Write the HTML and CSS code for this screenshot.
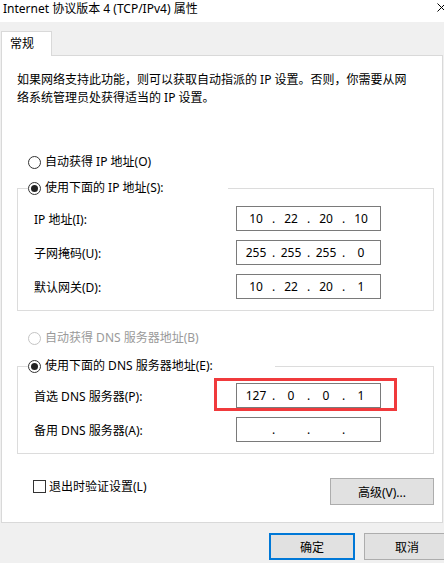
FILE: index.html
```html
<!DOCTYPE html>
<html>
	<head>
		<meta charset="UTF-8">
		<title>Internet 协议版本 4 (TCP/IPv4) 属性</title>
		<link rel="stylesheet" href="styles.css">
	</head>
	<body>
		<div class="titlebar">
			<span class="title">Internet 协议版本 4 (TCP/IPv4) 属性</span>
			<svg class="close" width="10" height="10" viewBox="0 0 10 10"><path d="M1.5 1.5L9.5 9.5M9.5 1.5L1.5 9.5" stroke="#000" stroke-width="1"/></svg>
		</div>
		<div class="tabstrip">
			<div class="tab">常规</div>
		</div>
		<div class="panel">
			<p class="desc">如果网络支持此功能，则可以获取自动指派的 IP 设置。否则，你需要从网<br>络系统管理员处获得适当的 IP 设置。</p>

			<div class="radio auto-ip"><span class="dot"></span>自动获得 IP 地址(O)</div>
			<fieldset class="group ip-group">
				<legend><span class="radio"><span class="dot on"></span>使用下面的 IP 地址(S):</span></legend>
				<div class="rows">
					<div class="row">
						<span>IP 地址(I):</span>
						<div class="ip"><span>10</span><i>.</i><span>22</span><i>.</i><span>20</span><i>.</i><span>10</span></div>
					</div>
					<div class="row">
						<span>子网掩码(U):</span>
						<div class="ip"><span>255</span><i>.</i><span>255</span><i>.</i><span>255</span><i>.</i><span>0</span></div>
					</div>
					<div class="row">
						<span>默认网关(D):</span>
						<div class="ip"><span>10</span><i>.</i><span>22</span><i>.</i><span>20</span><i>.</i><span>1</span></div>
					</div>
				</div>
			</fieldset>

			<div class="radio auto-dns"><span class="dot off"></span>自动获得 DNS 服务器地址(B)</div>
			<fieldset class="group dns-group">
				<legend><span class="radio"><span class="dot on"></span>使用下面的 DNS 服务器地址(E):</span></legend>
				<div class="rows">
					<div class="row">
						<span>首选 DNS 服务器(P):</span>
						<div class="ip"><span>127</span><i>.</i><span>0</span><i>.</i><span>0</span><i>.</i><span>1</span><b class="mark"></b></div>
					</div>
					<div class="row">
						<span>备用 DNS 服务器(A):</span>
						<div class="ip"><span></span><i>.</i><span></span><i>.</i><span></span><i>.</i><span></span></div>
					</div>
				</div>
			</fieldset>

			<div class="options">
				<div class="check"><span class="box"></span>退出时验证设置(L)</div>
				<button class="btn advanced">高级(V)...</button>
			</div>
		</div>
		<div class="footer">
			<button class="btn ok">确定</button>
			<button class="btn">取消</button>
		</div>
	</body>
</html>
```

FILE: styles.css
```css
*{margin: 0;padding: 0;box-sizing: border-box;}
body{
	width: 444px;
	height: 563px;
	overflow: hidden;
	background: #f0f0f0;
	font-size: 12px;
	font-family: "Noto Sans", "Noto Sans CJK SC", sans-serif;
	color: #000;
}
.titlebar{
	height: 22px;
	background: #fff;
	display: flex;
	justify-content: space-between;
	align-items: flex-start;
	padding-left: 3px;
}
.title{line-height: 17px;}
.close{margin-top: 2px;margin-right: -2px;}
.tabstrip{
	height: 33px;
	padding: 9px 0 0 1px;
}
.tab{
	position: relative;
	z-index: 1;
	width: 51px;
	height: 25px;
	padding-left: 8px;
	line-height: 23px;
	background: #fff;
	border: 1px solid #d9d9d9;
	border-bottom: 0;
}
.panel{
	height: 468px;
	margin: 0 1px;
	background: #fff;
	border: 1px solid #d9d9d9;
	padding: 15px 8px 0 15px;
}
.desc{
	line-height: 18px;
	white-space: nowrap;
}
.radio{
	display: flex;
	align-items: center;
	gap: 4px;
	height: 16px;
	line-height: 16px;
	white-space: nowrap;
}
.dot{
	width: 13px;
	height: 13px;
	border: 1px solid #333;
	border-radius: 50%;
	background: #fff;
	display: flex;
	align-items: center;
	justify-content: center;
	flex: none;
}
.dot.on::after{
	content: "";
	width: 7px;
	height: 7px;
	border-radius: 50%;
	background: #222;
}
.dot.off{border-color: #c4c4c4;}
.auto-ip{margin: 47px 0 0 11px;}
.auto-dns{
	margin: 19px 0 0 11px;
	color: #9a9a9a;
}
.group{
	border: 1px solid #dcdcdc;
	padding: 0;
	margin: 10px 0 0 0;
	min-width: 0;
}
.dns-group{margin-top: 12px;}
.group legend{
	margin-left: 10px;
	padding: 0;
}
.ip-group legend{width: 200px;}
.dns-group legend{width: 247px;}
.rows{
	display: grid;
	gap: 9px;
	padding: 10px 0 11px 16px;
}
.dns-group .rows{padding-top: 9px;}
.row{
	display: grid;
	grid-template-columns: 202px 145px;
	align-items: center;
}
.ip{
	position: relative;
	height: 25px;
	border: 1px solid #7a7a7a;
	background: #fff;
	display: grid;
	grid-template-columns: 30px 5px 30px 5px 30px 5px 30px;
	padding-left: 4px;
	align-items: center;
	text-align: center;
	line-height: 23px;
}
.ip i{font-style: normal;}
.mark{
	position: absolute;
	left: -23px;
	top: -6px;
	width: 183px;
	height: 33px;
	border: 3px solid #f03a3c;
}
.options{
	display: flex;
	justify-content: space-between;
	align-items: flex-start;
	margin-top: 24px;
	padding-left: 16px;
}
.check{
	display: flex;
	align-items: center;
	gap: 3px;
	margin-top: 2px;
	line-height: 13px;
}
.box{
	width: 13px;
	height: 13px;
	border: 1px solid #333;
	background: #fff;
}
.btn{
	height: 27px;
	width: 86px;
	border: 1px solid #adadad;
	background: #e1e1e1;
	font: inherit;
	color: inherit;
	display: flex;
	align-items: center;
	justify-content: center;
}
.advanced{width: 104px;}
.footer{
	display: flex;
	justify-content: flex-end;
	gap: 9px;
	margin: 10px -6px 0 0;
}
.ok{border: 2px solid #0078d7;}
```
